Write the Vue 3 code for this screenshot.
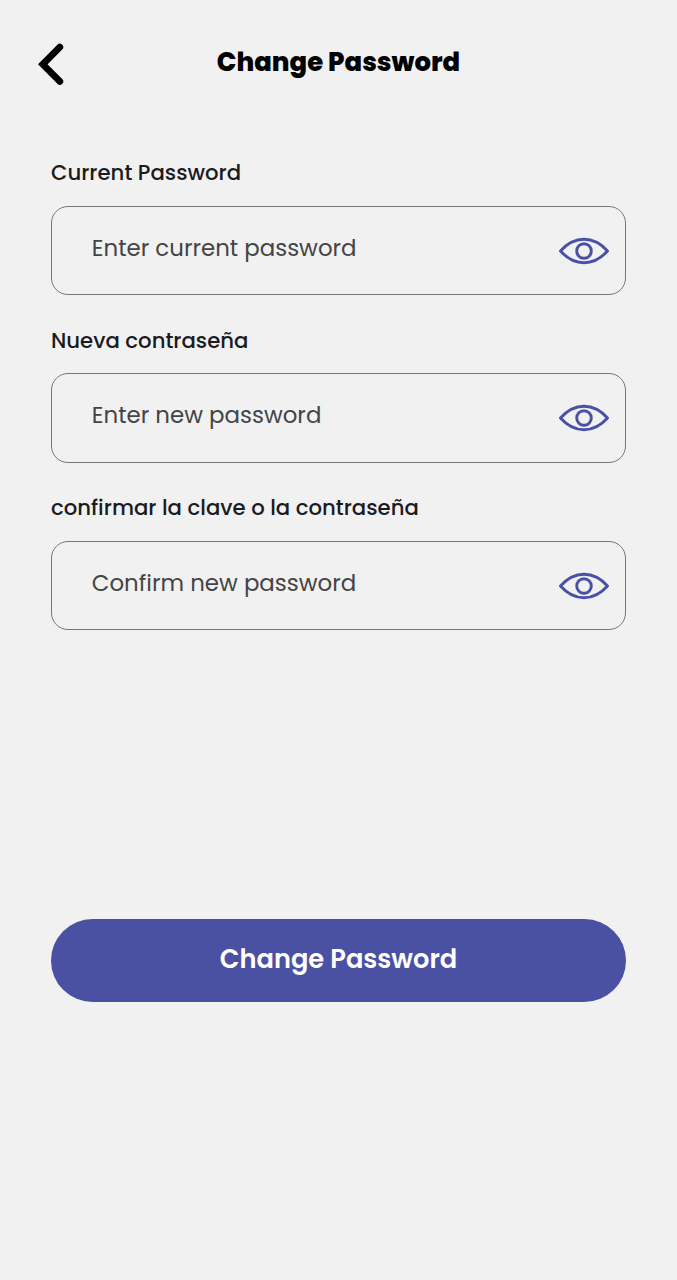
<script setup>
import { ref } from 'vue'

const fields = ref([
  { id: 'current', label: 'Current Password', hint: 'Enter current password' },
  { id: 'fresh', label: 'Nueva contraseña', hint: 'Enter new password' },
  { id: 'confirm', label: 'confirmar la clave o la contraseña', hint: 'Confirm new password' }
])
</script>

<template>
  <main class="screen">
    <header class="top">
      <svg class="back" width="27" height="44" viewBox="0 0 27 44" aria-label="Back">
        <path d="M22.8 5.2 5.8 22.3 22.8 39.4" />
      </svg>
      <h1 class="title">Change Password</h1>
    </header>
    <form class="form" @submit.prevent>
      <div v-for="f in fields" :key="f.id" class="field">
        <div class="label">{{ f.label }}</div>
        <div class="box">
          <span class="hint">{{ f.hint }}</span>
          <svg class="eye" width="50" height="28" viewBox="0 0 50 28">
            <path d="M1.5 14C15.5-1.7 34.500-1.7 48.500 14 34.500 29.700 15.500 29.700 1.500 14Z" />
            <circle cx="25" cy="14" r="7.300" />
          </svg>
        </div>
      </div>
      <button class="submit">Change Password</button>
    </form>
  </main>
</template>

<style>
body {
  background: #f1f1f1;
}
</style>

<style scoped>
.screen {
  box-sizing: border-box;
  width: 677px;
  height: 1280px;
  overflow: hidden;
  background: #f1f1f1;
  font-family: Poppins, Inter, "Open Sans", sans-serif;
  white-space: nowrap;
}
.top {
  display: grid;
  grid-template-columns: 65px 1fr 65px;
  height: 156.8px;
  padding-top: 42px;
  box-sizing: border-box;
}
.back {
  margin-left: 37px;
}
.back path {
  fill: none;
  stroke: #000;
  stroke-width: 6.8;
  stroke-linecap: round;
  stroke-linejoin: miter;
}
.title {
  margin: 0;
  text-align: center;
  font-size: 25.9px;
  line-height: 40px;
  font-weight: 800;
  color: #000;
}
.form {
  display: flex;
  flex-direction: column;
  padding: 0 51px;
}
.field {
  height: 167.5px;
}
.label {
  height: 48.6px;
  padding-top: 0.4px;
  font-size: 21.24px;
  line-height: 32px;
  font-weight: 500;
  color: #1b1b1f;
}
.box {
  box-sizing: border-box;
  height: 89.5px;
  border: 1.3px solid #77777a;
  border-radius: 17px;
  display: flex;
  justify-content: space-between;
  align-items: flex-start;
  padding: 23.8px 16px 0 39.8px;
}
.hint {
  font-size: 22.9px;
  line-height: 34px;
  font-weight: 400;
  color: #444446;
}
.eye {
  margin-top: 6.2px;
}
.eye path,
.eye circle {
  fill: none;
  stroke: #4a50a5;
  stroke-width: 2.9;
  stroke-linejoin: round;
}
.submit {
  margin: 260px 0 0;
  height: 83px;
  padding: 0 0 3.4px;
  border: 0;
  border-radius: 42px;
  background: #4a51a3;
  color: #fff;
  font: inherit;
  font-size: 25.7px;
  font-weight: 600;
}
</style>
